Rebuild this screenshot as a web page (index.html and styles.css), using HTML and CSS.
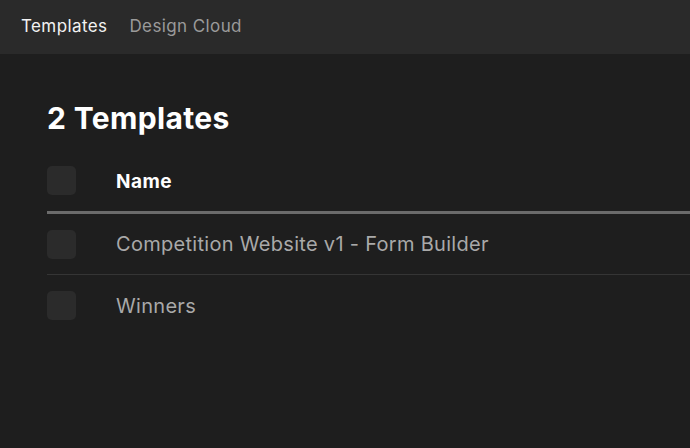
FILE: index.html
```html
<!DOCTYPE html>
<html lang="en">
<head>
  <meta charset="UTF-8">
  <title>Templates</title>
  <link rel="stylesheet" href="styles.css">
</head>
<body>

<!-- top tabs -->
<nav class="tabs">
  <a class="tab active">Templates</a>
  <a class="tab">Design Cloud</a>
</nav>

<main class="content">
  <h1 class="title">2 Templates</h1>

  <div class="list">
    <div class="row head">
      <span class="check"></span>
      <span class="name">Name</span>
    </div>
    <div class="row">
      <span class="check"></span>
      <span class="name">Competition Website v1 - Form Builder</span>
    </div>
    <div class="row last">
      <span class="check"></span>
      <span class="name">Winners</span>
    </div>
  </div>
</main>

</body>
</html>
```

FILE: styles.css
```css
body {
  margin: 0;
  background: #1e1e1e;
  font-family: Inter, "Noto Sans", sans-serif;
  color: #fff;
}

.tabs {
  display: flex;
  gap: 22px;
  height: 54px;
  align-items: center;
  padding: 0 21px 2px;
  box-sizing: border-box;
  background: #2a2a2a;
}
.tab { font-size: 17px; letter-spacing: 0.4px; color: #9a9a9a; }
.tab.active { color: #f2f2f2; }

.content { padding: 0 0 0 47px; }

.title {
  margin: 45px 0 0;
  font-size: 30px;
  font-weight: 700;
  letter-spacing: 0.35px;
  line-height: 38px;
}

.list { margin-top: 29px; }

.row {
  display: flex;
  align-items: center;
  height: 61px;
  border-bottom: 1px solid #353535;
  box-sizing: border-box;
}
.row.head {
  height: 48px;
  align-items: flex-start;
  border-bottom: 3px solid #6b6b6b;
}
.row.last { border-bottom: none; }

.check {
  width: 29px;
  height: 29px;
  border-radius: 5px;
  background: #2b2b2b;
  flex-shrink: 0;
}

.name {
  margin-left: 40px;
  font-size: 20px;
  letter-spacing: 0.3px;
  color: #a9a9a9;
}
.head .name {
  color: #fff;
  font-weight: 700;
  font-size: 19px;
  letter-spacing: 0.5px;
  line-height: 31px;
}
```
